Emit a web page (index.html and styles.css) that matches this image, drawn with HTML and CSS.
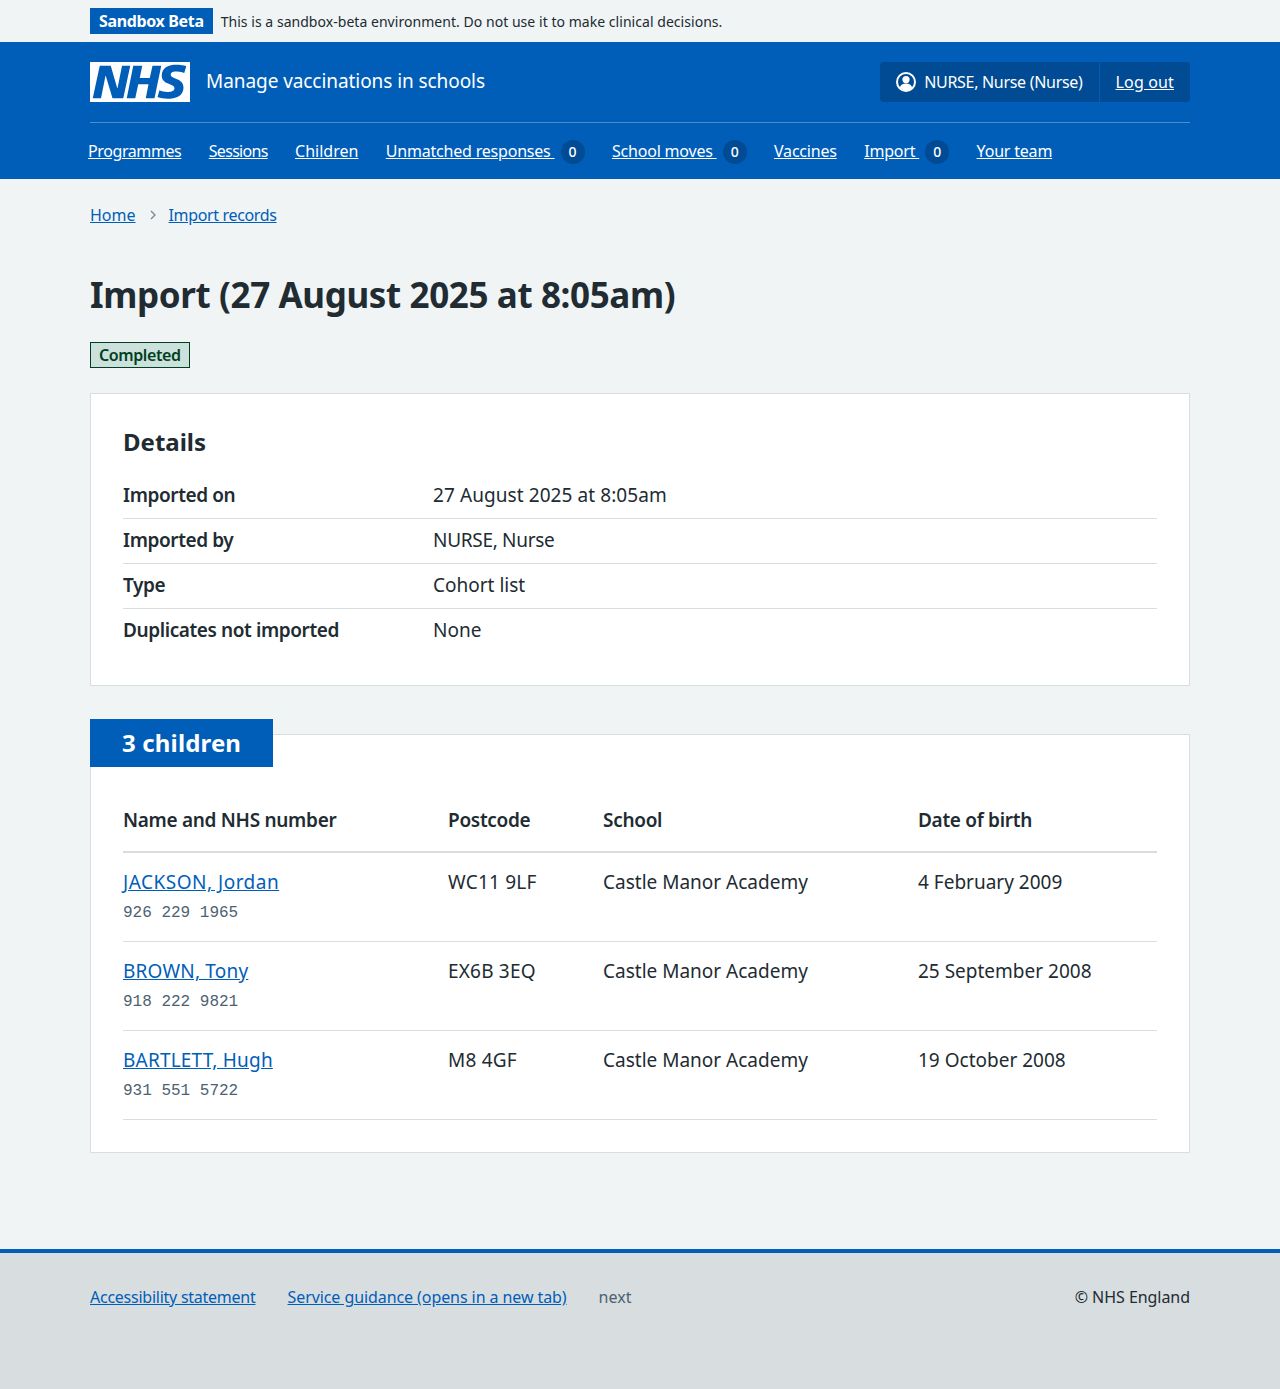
FILE: index.html
```html
<!DOCTYPE html>
<html lang="en">
<head>
    <meta charset="UTF-8">
    <meta name="viewport" content="width=device-width, initial-scale=1.0">
    <title>Import (27 August 2025 at 8:05am)</title>
    <link rel="stylesheet" href="styles.css">
</head>
<body>

<div class="env-banner">
    <div class="width">
        <strong class="env-tag">Sandbox Beta</strong>
        <span class="env-text">This is a sandbox-beta environment. Do not use it to make clinical decisions.</span>
    </div>
</div>

<header class="header">
    <div class="width">
        <div class="header-top">
            <a class="logo" href="#">
                <svg class="logo-svg" viewBox="0 0 40 16" aria-label="NHS">
                    <path fill="#fff" d="M0 0h40v16H0z"/>
                    <path fill="#005eb8" d="M3.9 1.5h4.4l2.6 9h.1l1.8-9h3.3l-2.8 13H9l-2.7-9h-.1l-1.8 9H1.1M17.3 1.5h3.6l-1 4.9h4L25 1.5h3.5l-2.7 13h-3.5l1.1-5.6h-4.1l-1.2 5.6h-3.4M37.7 4.4c-.7-.3-1.6-.6-2.9-.6-1.4 0-2.5.2-2.5 1.3 0 1.8 5.1 1.2 5.1 5.1 0 3.6-3.3 4.5-6.4 4.5-1.3 0-2.9-.3-4-.7l.8-2.7c.7.4 2.1.7 3.2.7s2.8-.2 2.8-1.5c0-2.1-5.1-1.3-5.1-5 0-3.4 2.9-4.4 5.8-4.4 1.6 0 3.1.2 4 .6"/>
                </svg>
                <span class="service-name">Manage vaccinations in schools</span>
            </a>
            <div class="account">
                <span class="account-item">
                    <svg class="account-icon" viewBox="0 0 20 20">
                        <circle cx="10" cy="10" r="9" fill="none" stroke="#fff" stroke-width="2"/>
                        <circle cx="10" cy="7.6" r="3.6" fill="#fff"/>
                        <path fill="#fff" d="M3.8 15.4c.8-2.6 3-3.9 6.2-3.9s5.400 1.300 6.200 3.900A8.200 8.200 0 0 1 10 18.500a8.200 8.200 0 0 1-6.200-3.100z"/>
                    </svg>
                    <span class="account-name">NURSE, Nurse (Nurse)</span>
                </span>
                <a class="account-item account-link" href="#">Log out</a>
            </div>
        </div>
        <nav class="nav">
            <a class="nav-narrow" href="#">Programmes</a>
            <a class="nav-tight" href="#">Sessions</a>
            <a class="nav-loose" href="#">Children</a>
            <span class="nav-item"><a href="#">Unmatched responses&nbsp;</a><span class="count">0</span></span>
            <span class="nav-item"><a href="#">School moves&nbsp;</a><span class="count">0</span></span>
            <a href="#">Vaccines</a>
            <span class="nav-item"><a href="#">Import&nbsp;</a><span class="count">0</span></span>
            <a href="#">Your team</a>
        </nav>
    </div>
</header>

<div class="width">
    <div class="breadcrumb">
        <a href="#">Home</a>
        <svg class="chevron" viewBox="0 0 8 12"><path d="M2 2l4 4-4 4" fill="none" stroke="#768692" stroke-width="1.300"/></svg>
        <a class="breadcrumb-last" href="#">Import records</a>
    </div>

    <main class="main">
        <h1>Import (27 August 2025 at 8:05am)</h1>
        <strong class="tag">Completed</strong>

        <section class="card">
            <h2>Details</h2>
            <dl class="summary">
                <div class="summary-row">
                    <dt>Imported on</dt>
                    <dd class="value-date">27 August 2025 at 8:05am</dd>
                </div>
                <div class="summary-row">
                    <dt>Imported by</dt>
                    <dd class="value-caps">NURSE, Nurse</dd>
                </div>
                <div class="summary-row">
                    <dt>Type</dt>
                    <dd>Cohort list</dd>
                </div>
                <div class="summary-row">
                    <dt>Duplicates not imported</dt>
                    <dd>None</dd>
                </div>
            </dl>
        </section>

        <section class="card card-feature">
            <h2 class="feature-heading">3 children</h2>
            <table class="table">
                <thead>
                    <tr>
                        <th class="col-name">Name and NHS number</th>
                        <th class="col-postcode">Postcode</th>
                        <th class="col-school">School</th>
                        <th>Date of birth</th>
                    </tr>
                </thead>
                <tbody>
                    <tr>
                        <td><a class="name-wide" href="#">JACKSON, Jordan</a><span class="nhs-number">926&nbsp;229&nbsp;1965</span></td>
                        <td class="postcode">WC11 9LF</td>
                        <td>Castle Manor Academy</td>
                        <td>4 February 2009</td>
                    </tr>
                    <tr>
                        <td><a href="#">BROWN, Tony</a><span class="nhs-number">918&nbsp;222&nbsp;9821</span></td>
                        <td class="postcode">EX6B 3EQ</td>
                        <td>Castle Manor Academy</td>
                        <td>25 September 2008</td>
                    </tr>
                    <tr>
                        <td><a href="#">BARTLETT, Hugh</a><span class="nhs-number">931&nbsp;551&nbsp;5722</span></td>
                        <td class="postcode">M8 4GF</td>
                        <td>Castle Manor Academy</td>
                        <td>19 October 2008</td>
                    </tr>
                </tbody>
            </table>
        </section>
    </main>
</div>

<footer class="footer">
    <div class="width footer-inner">
        <div class="footer-links">
            <a class="footer-access" href="#">Accessibility statement</a>
            <a class="footer-guidance" href="#">Service guidance (opens in a new tab)</a>
            <span class="footer-version">next</span>
        </div>
        <span class="footer-copy">© NHS England</span>
    </div>
</footer>

</body>
</html>
```

FILE: styles.css
```css
body {
    font-family: "Noto Sans", Arial, sans-serif;
    background-color: #f0f4f5;
    color: #212b32;
    margin: 0;
    font-size: 19px;
    line-height: 28px;
}
a {
    color: #005eb8;
}
.width {
    width: 1100px;
    margin: 0 auto;
}

/* environment banner */
.env-banner {
    height: 42px;
    box-sizing: border-box;
    padding-top: 8px;
}
.env-banner .width {
    display: flex;
    align-items: center;
    height: 26px;
}
.env-tag {
    background: #005eb8;
    color: #fff;
    font-size: 16px;
    line-height: 26px;
    letter-spacing: -0.35px;
    padding: 0 9px;
}
.env-text {
    font-size: 14px;
    letter-spacing: 0.04px;
    margin-left: 8px;
    padding-top: 2px;
}

/* header */
.header {
    background: #005eb8;
    height: 137px;
}
.header-top {
    display: flex;
    justify-content: space-between;
    padding-top: 20px;
    box-sizing: border-box;
    border-bottom: 1px solid #4c8ecd;
    height: 81px;
}
.logo {
    display: flex;
    align-items: center;
    height: 40px;
    color: #fff;
    text-decoration: none;
}
.logo-svg {
    width: 100px;
    height: 40px;
}
.service-name {
    font-size: 19px;
    letter-spacing: -0.07px;
    margin-left: 16px;
    margin-bottom: 2px;
}
.account {
    display: flex;
    height: 40px;
    background: #004b93;
    border-radius: 4px;
    color: #fff;
    font-size: 16px;
}
.account-item {
    display: flex;
    align-items: center;
    padding: 0 16px;
}
.account-name {
    letter-spacing: -0.3px;
}
.account-link {
    color: #fff;
    letter-spacing: 0.15px;
    border-left: 1px solid #005eb8;
}
.account-icon {
    width: 20px;
    height: 20px;
    margin-right: 8px;
}
.nav {
    display: flex;
    align-items: center;
    gap: 27.4px;
    height: 56px;
    margin-left: -2px;
    font-size: 16px;
    letter-spacing: -0.2px;
}
.nav a {
    color: #fff;
}
.nav .nav-narrow {
    letter-spacing: -0.4px;
}
.nav .nav-tight {
    letter-spacing: -0.7px;
}
.nav .nav-loose {
    letter-spacing: 0;
}
.nav-item {
    display: flex;
    align-items: center;
}
.count {
    display: block;
    width: 24px;
    height: 24px;
    border-radius: 50%;
    background: #004b93;
    color: #fff;
    font-size: 14px;
    font-weight: 500;
    line-height: 24px;
    letter-spacing: 0;
    text-align: center;
    margin-left: 6px;
    margin-top: 1px;
}

/* breadcrumb */
.breadcrumb {
    display: flex;
    align-items: center;
    height: 72px;
    font-size: 16px;
}
.breadcrumb-last {
    letter-spacing: -0.35px;
}
.chevron {
    width: 8px;
    height: 12px;
    margin: 0 12px 0 13px;
}

/* main */
.main {
    padding-top: 20px;
    padding-bottom: 96px;
}
h1 {
    font-size: 35px;
    line-height: 48px;
    letter-spacing: -0.38px;
    font-weight: 700;
    margin: 0 0 23px;
}
.tag {
    display: block;
    width: fit-content;
    box-sizing: border-box;
    height: 26px;
    padding: 0 8px;
    border: 1px solid #00401e;
    background: #cce0dc;
    color: #00401e;
    font-size: 16px;
    line-height: 24px;
    letter-spacing: -0.4px;
    font-weight: 600;
    margin-bottom: 25px;
}
.card {
    background: #fff;
    border: 1px solid #d8dde0;
    padding: 32px;
    margin-bottom: 32px;
}
.card h2 {
    font-size: 24px;
    line-height: 32px;
    font-weight: 700;
    margin: 0 0 16px;
}
.summary {
    margin: 0;
}
.summary-row {
    display: flex;
    height: 45px;
    box-sizing: border-box;
    padding-top: 7px;
    border-bottom: 1px solid #d8dde0;
}
.summary-row:last-child {
    height: 44px;
    border-bottom: 0;
}
.summary-row dt {
    width: 310px;
    font-weight: 600;
    letter-spacing: -0.4px;
}
.summary-row dd {
    margin: 0;
}
.summary-row .value-date {
    letter-spacing: 0.08px;
}
.summary-row .value-caps {
    letter-spacing: -0.3px;
}

/* card with a blue heading tab */
.card-feature {
    position: relative;
    margin-top: 48px;
    margin-bottom: 0;
    padding-top: 64px;
}
.card .feature-heading {
    position: absolute;
    top: -16px;
    left: -1px;
    margin: 0;
    background: #005eb8;
    color: #fff;
    padding: 8px 32px;
    font-size: 24px;
    line-height: 32px;
    letter-spacing: 0.15px;
}
.table {
    width: 100%;
    border-collapse: collapse;
    table-layout: fixed;
}
.col-name {
    width: 325px;
}
.col-postcode {
    width: 155px;
}
.col-school {
    width: 315px;
}
.table th {
    text-align: left;
    font-weight: 600;
    letter-spacing: -0.3px;
    padding: 0 0 17px;
    height: 35px;
    vertical-align: bottom;
    border-bottom: 2px solid #d8dde0;
}
.table td {
    vertical-align: top;
    padding: 15px 0 16px;
    border-bottom: 1px solid #d8dde0;
}
.table td a {
    letter-spacing: 0.2px;
}
.table td .name-wide {
    letter-spacing: 0.5px;
}
.table .postcode {
    letter-spacing: 0.2px;
}
.nhs-number {
    display: block;
    font-family: "Liberation Mono", monospace;
    font-size: 16px;
    line-height: 24px;
    color: #4c6272;
    margin-top: 5px;
}

/* footer */
.footer {
    background: #d8dde0;
    border-top: 4px solid #005eb8;
    height: 136px;
    font-size: 16px;
}
.footer-inner {
    display: flex;
    justify-content: space-between;
    padding-top: 30px;
}
.footer-links {
    display: flex;
    gap: 32px;
}
.footer-access {
    letter-spacing: -0.25px;
}
.footer-guidance {
    letter-spacing: -0.08px;
}
.footer-version {
    color: #4c6272;
}
.footer-copy {
    letter-spacing: -0.05px;
}
```
